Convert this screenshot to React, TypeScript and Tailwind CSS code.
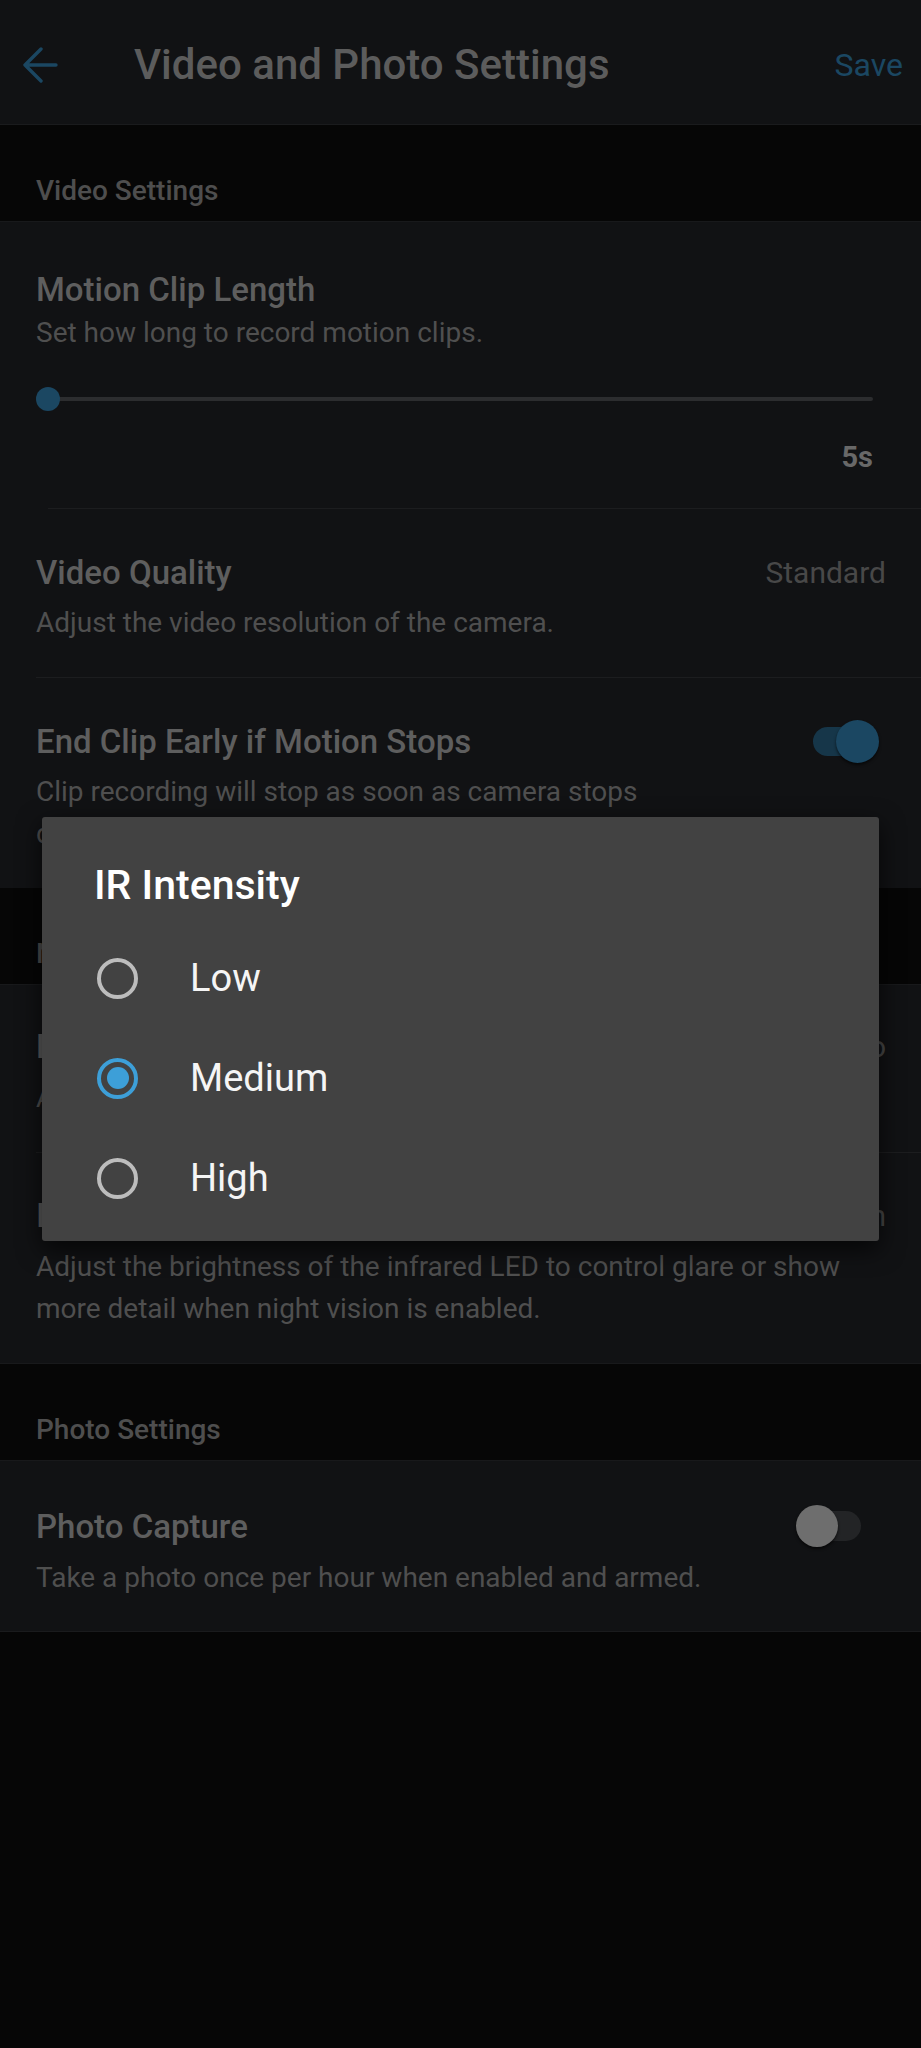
import React from "react";

const font = "font-['Roboto','Noto_Sans',sans-serif]";

function BackArrow() {
  return (
    <svg width="36" height="36" viewBox="0 0 36 36" fill="none">
      <path
        d="M34 18H3M19 2L3 18L19 34"
        stroke="#1b4762"
        strokeWidth="3.4"
        strokeLinecap="round"
        strokeLinejoin="round"
      />
    </svg>
  );
}

function SectionHeader({ label }: { label: string }) {
  return (
    <div className="h-[97px] border-b border-[#18191b] bg-[#060606] pl-[36px] pt-[50px]">
      <div className="text-[28px] font-medium leading-[32px] text-[#4e4e4e]">{label}</div>
    </div>
  );
}

function Toggle({ on }: { on: boolean }) {
  if (on) {
    return (
      <div className="relative h-[43px] w-[66px]">
        <div className="absolute left-0 top-[7px] h-[29px] w-[60px] rounded-full bg-[#163649]" />
        <div className="absolute right-0 top-0 h-[43px] w-[43px] rounded-full bg-[#1b4762] shadow-[0_2px_3px_rgba(0,0,0,0.6)]" />
      </div>
    );
  }
  return (
    <div className="relative h-[42px] w-[65px]">
      <div className="absolute right-0 top-[6px] h-[30px] w-[58px] rounded-full bg-[#232426]" />
      <div className="absolute left-0 top-0 h-[42px] w-[42px] rounded-full bg-[#6e6e6e] shadow-[0_2px_3px_rgba(0,0,0,0.6)]" />
    </div>
  );
}

function Radio({ checked }: { checked: boolean }) {
  if (checked) {
    return (
      <div className="flex h-[41px] w-[41px] items-center justify-center rounded-full border-[4px] border-[#3d9fd8]">
        <div className="h-[22px] w-[22px] rounded-full bg-[#3d9fd8]" />
      </div>
    );
  }
  return <div className="h-[41px] w-[41px] rounded-full border-[4px] border-[#bdbdbd]" />;
}

export default function App() {
  const options = [
    { label: "Low", checked: false },
    { label: "Medium", checked: true },
    { label: "High", checked: false },
  ];

  return (
    <div className={`relative min-h-[2048px] w-[921px] bg-[#060606] ${font}`}>
      {/* Top bar */}
      <div className="flex h-[125px] items-center border-b border-[#1a1b1d] bg-[#111214] pl-[22px] pr-[18px] pt-[6px]">
        <BackArrow />
        <div className="ml-[76px] flex-1 text-[42px] font-medium leading-[48px] text-[#5c5c5c]">
          Video and Photo Settings
        </div>
        <div className="text-[32px] leading-[40px] text-[#1b4762]">Save</div>
      </div>

      <SectionHeader label="Video Settings" />

      {/* Motion clip length */}
      <div className="bg-[#111214]">
        <div className="pl-[36px] pr-[48px] pt-[48px] pb-[31px]">
          <div className="text-[33px] font-medium leading-[40px] text-[#5e5e5e]">Motion Clip Length</div>
          <div className="mt-[3px] text-[28px] leading-[40px] text-[#4f4f4f]">
            Set how long to record motion clips.
          </div>
          <div className="relative mt-[34px] h-[24px]">
            <div className="absolute left-[12px] right-0 top-[10px] h-[4px] rounded-full bg-[#2c2d2f]" />
            <div className="absolute left-0 top-0 h-[24px] w-[24px] rounded-full bg-[#1b4762]" />
          </div>
          <div className="mt-[26px] text-right text-[29px] font-bold leading-[40px] text-[#686868]">5s</div>
        </div>
        <div className="ml-[48px] h-px bg-[#1c1d1f]" />

        {/* Video quality */}
        <div className="pl-[36px] pr-[35px] pt-[44px] pb-[34px]">
          <div className="flex items-center justify-between">
            <div className="text-[33px] font-medium leading-[40px] text-[#5e5e5e]">Video Quality</div>
            <div className="text-[30px] leading-[40px] text-[#484848]">Standard</div>
          </div>
          <div className="mt-[10px] text-[28px] leading-[40px] text-[#4f4f4f]">
            Adjust the video resolution of the camera.
          </div>
        </div>
        <div className="ml-[36px] h-px bg-[#1c1d1f]" />

        {/* End clip early */}
        <div className="flex pl-[36px] pr-[42px] pt-[44px] pb-[33px]">
          <div className="flex-1">
            <div className="text-[33px] font-medium leading-[40px] text-[#5e5e5e]">
              End Clip Early if Motion Stops
            </div>
            <div className="mt-[9px] text-[28px] leading-[42px] text-[#4f4f4f]">
              <div>Clip recording will stop as soon as camera stops</div>
              <div>detecting motion.</div>
            </div>
          </div>
          <div className="-mt-[2px]">
            <Toggle on />
          </div>
        </div>
      </div>

      <SectionHeader label="Night Vision Settings" />

      <div className="bg-[#111214]">
        {/* Night vision mode */}
        <div className="pl-[36px] pr-[35px] pt-[42px] pb-[34px]">
          <div className="flex items-center justify-between">
            <div className="text-[33px] font-medium leading-[40px] text-[#5e5e5e]">Night Vision</div>
            <div className="text-[30px] leading-[40px] text-[#484848]">Auto</div>
          </div>
          <div className="mt-[11px] text-[28px] leading-[40px] text-[#4f4f4f]">
            Automatically turn on night vision in low light.
          </div>
        </div>
        <div className="ml-[36px] h-px bg-[#1c1d1f]" />

        {/* IR intensity */}
        <div className="pl-[36px] pr-[35px] pt-[43px] pb-[33px]">
          <div className="flex items-center justify-between">
            <div className="text-[33px] font-medium leading-[40px] text-[#5e5e5e]">IR Intensity</div>
            <div className="text-[30px] leading-[40px] text-[#484848]">Medium</div>
          </div>
          <div className="mt-[10px] text-[28px] leading-[42px] text-[#4f4f4f]">
            <div className="whitespace-nowrap">
              Adjust the brightness of the infrared LED to control glare or show
            </div>
            <div>more detail when night vision is enabled.</div>
          </div>
        </div>
      </div>

      <div className="border-t border-[#18191b]">
        <SectionHeader label="Photo Settings" />
      </div>

      {/* Photo capture */}
      <div className="flex border-b border-[#1a1b1d] bg-[#111214] pl-[36px] pr-[60px] pt-[46px] pb-[33px]">
        <div className="flex-1">
          <div className="text-[33px] font-medium leading-[40px] text-[#5e5e5e]">Photo Capture</div>
          <div className="mt-[11px] text-[28px] leading-[40px] text-[#4f4f4f]">
            Take a photo once per hour when enabled and armed.
          </div>
        </div>
        <div className="-mt-[2px]">
          <Toggle on={false} />
        </div>
      </div>

      {/* IR intensity picker */}
      <div className="absolute left-[42px] top-[817px] h-[424px] w-[837px] rounded-[3px] bg-[#424242] pl-[52px] pt-[44px] shadow-[0_8px_24px_rgba(0,0,0,0.7)]">
        <div className="text-[41px] font-medium leading-[48px] text-white">IR Intensity</div>
        <div className="mt-[19px]">
          {options.map((o) => (
            <div key={o.label} className="flex h-[100px] items-center pl-[3px]">
              <Radio checked={o.checked} />
              <div className="ml-[52px] text-[38px] leading-[44px] text-[#f5f5f5]">{o.label}</div>
            </div>
          ))}
        </div>
      </div>
    </div>
  );
}
